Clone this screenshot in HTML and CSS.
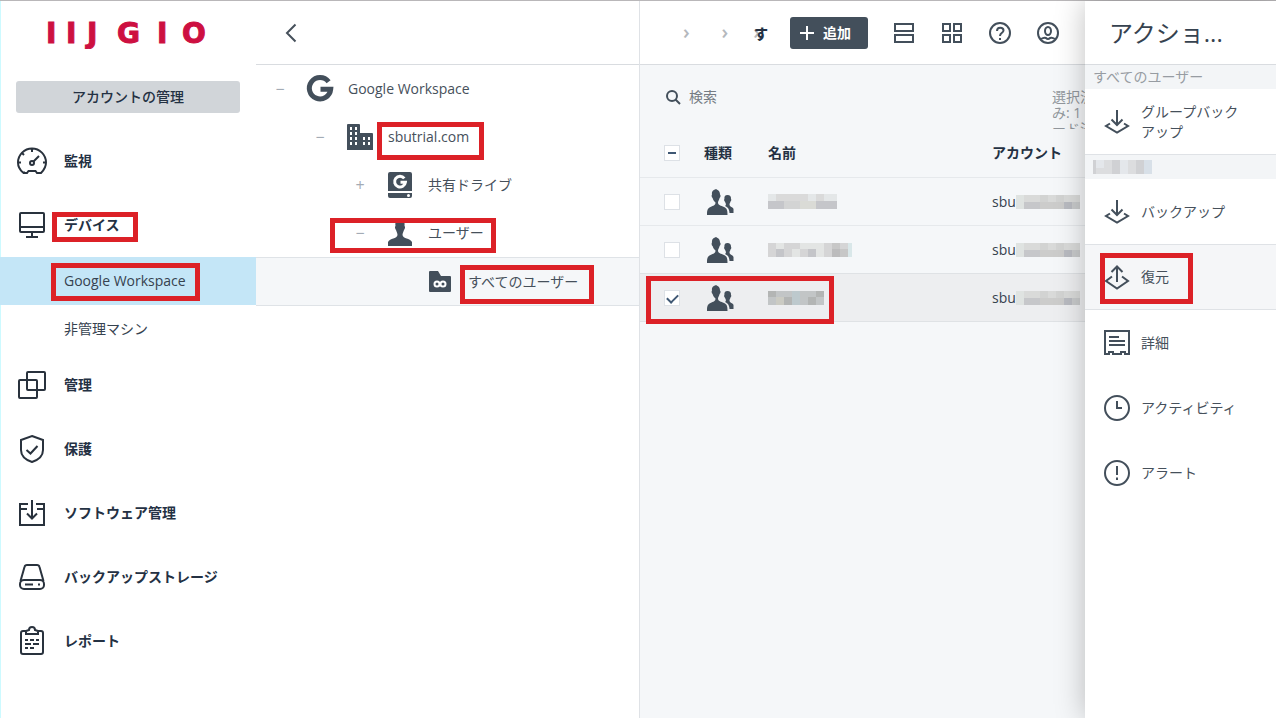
FILE: index.html
```html
<!DOCTYPE html>
<html lang="ja">
<head>
    <meta charset="UTF-8">
    <meta name="viewport" content="width=device-width, initial-scale=1.0">
    <title>IIJ GIO - Google Workspace</title>
    <link rel="stylesheet" href="styles.css">
</head>
<body>

    <!-- Shared icons -->
    <svg class="sprite" aria-hidden="true">
        <symbol id="people" viewBox="0 0 28 28">
            <path d="M10 1C11 2 14 2 14 6.500C15 7 14.600 9.500 13.600 10C13.300 12 12 13 12 14.500C12 17.500 15 17.500 18 19C21 20.500 21.500 22 21.500 27H1C1 22 1.500 20.500 4.500 19C7.500 17.500 9.500 17.500 9.500 14.500C8 13 7 12 6.600 10C5.600 9.500 5.300 7 6 6.500C5.500 3 7.500 2 10 1Z"/>
            <path d="M21.500 7C24 7 25.200 8.500 25 11C25.600 11.500 25.200 13 24.600 13.300C24.300 15 23.500 15.500 23.500 16.500C23.500 19 27 19 27.500 21V25H23.500C23.300 21 22 19.500 19 18C20.500 17 20 15.500 18.800 13.500C18.200 13 17.800 11.500 18.400 11C18.200 8.500 19 7 21.500 7Z"/>
        </symbol>
        <symbol id="backup" viewBox="0 0 26 26">
            <path d="M13 1V16M7.500 10.500L13 16L18.500 10.500M6 14.500L2 17L13 23.500L24 17L20 14.500"/>
        </symbol>
        <symbol id="account-mask" viewBox="0 0 64 14">
            <path fill="#dfe3e1" d="M0 0h8v14H0z"/>
            <path fill="#d9dad9" d="M8 0h56v7H8z"/>
            <path fill="#d2d3d2" d="M24 0h8v7h-8zM40 0h8v7h-8z"/>
            <path fill="#c6c7ca" d="M8 7h16v7H8zM48 7h8v7h-8z"/>
            <path fill="#cccccb" d="M24 7h24v7H24z"/>
            <path fill="#b9bbc1" d="M48 7h8v7h-8z"/>
            <path fill="#c8cacb" d="M56 7h8v7h-8z"/>
        </symbol>
    </svg>

    <div class="app">

        <!-- Sidebar -->
        <nav class="sidebar">
            <div class="brand">
                <svg width="168" height="32" viewBox="0 0 168 32" role="img" aria-label="IIJ GIO">
                    <text class="brand-text" y="26" x="2 22 43 60 73 113 138">IIJ GIO</text>
                </svg>
            </div>
            <button class="account-btn" type="button">アカウントの管理</button>

            <a class="nav-item" href="#">
                <svg class="nav-icon" viewBox="0 0 32 32"><path d="M9 27.500H7C4 25 2 21.500 2 17.500a14 14 0 0 1 28 0C30 21.500 28 25 25 28H21L19.500 26H12.500L11 28H7M16 4V7M2 17.500H5M27 17.500H30M6 8L8 10"/><circle cx="16" cy="18" r="2"/><path d="M17.500 16.500L23 11"/></svg>
                <span>監視</span>
            </a>
            <a class="nav-item" href="#">
                <svg class="nav-icon" viewBox="0 0 32 32"><rect x="4" y="4" width="24" height="19" rx="1"/><path d="M4 18H28M16 23V28M10 28H22"/></svg>
                <span>デバイス</span>
                <i class="mark mark-devices"></i>
            </a>
            <a class="nav-sub active" href="#">Google Workspace<i class="mark mark-workspace"></i></a>
            <a class="nav-sub" href="#">非管理マシン</a>
            <a class="nav-item" href="#">
                <svg class="nav-icon" viewBox="0 0 32 32"><rect x="11" y="3" width="18" height="18" rx="1"/><rect x="3" y="11" width="18" height="18" rx="1"/></svg>
                <span>管理</span>
            </a>
            <a class="nav-item" href="#">
                <svg class="nav-icon" viewBox="0 0 32 32"><path d="M16 3L27 7V17C27 23 22 27 16 29C10 27 5 23 5 17V7ZM10.500 17L14.500 20.500L21.500 13"/></svg>
                <span>保護</span>
            </a>
            <a class="nav-item" href="#">
                <svg class="nav-icon" viewBox="0 0 32 32"><path d="M12 7H4V28H28V7H20M4 12H11M21 12H28M16 3V21M11 16.500L16 21.500L21 16.500"/></svg>
                <span>ソフトウェア管理</span>
            </a>
            <a class="nav-item" href="#">
                <svg class="nav-icon" viewBox="0 0 32 32"><path d="M4.500 20L8.500 6Q9 4 11 4H21Q23 4 23.500 6L27.500 20"/><rect x="4" y="19" width="24" height="9" rx="4"/><path d="M9 23.500H17M22 23.500H24"/></svg>
                <span>バックアップストレージ</span>
            </a>
            <a class="nav-item" href="#">
                <svg class="nav-icon" viewBox="0 0 32 32"><path d="M10 6H7Q5 6 5 8V27Q5 29 7 29H25Q27 29 27 27V8Q27 6 25 6H22M10 9V6L13 5Q13 2 16 2Q19 2 19 5L22 6V9ZM9 15H12M14 15H18M20 15H23M9 19H15M17 19H23M9 23H12M14 23H18"/></svg>
                <span>レポート</span>
            </a>
        </nav>

        <!-- Group tree -->
        <section class="tree">
            <header class="bar">
                <button class="back-btn" type="button" aria-label="戻る">
                    <svg width="12" height="20" viewBox="0 0 12 20"><path d="M10.500 1.500L2 10L10.500 18.500"/></svg>
                </button>
            </header>
            <div class="tree-row">
                <span class="toggle">−</span>
                <svg class="tree-icon" viewBox="0 0 32 32"><path class="g-mark" d="M24.600 8.800A10.700 10.700 0 1 0 26.700 16.300H16.500"/></svg>
                <a href="#">Google Workspace</a>
            </div>
            <div class="tree-row level-1">
                <span class="toggle">−</span>
                <svg class="tree-icon" viewBox="0 0 32 32"><path fill-rule="evenodd" d="M4 3H15Q16 3 16 4V12H28Q29 12 29 13V29H3V4Q3 3 4 3ZM6 6V9H8V6ZM11 6V9H13V6ZM6 11V14H8V11ZM11 11V14H13V11ZM6 16V19H8V16ZM11 16V19H13V16ZM6 21V24H8V21ZM11 21V24H13V21ZM19 16V19H21V16ZM24 16V19H26V16ZM19 21V24H21V21ZM24 21V24H26V21Z"/></svg>
                <a href="#">sbutrial.com</a>
                <i class="mark mark-domain"></i>
            </div>
            <div class="tree-row level-2">
                <span class="toggle">+</span>
                <svg class="tree-icon" viewBox="0 0 32 32"><path d="M6 3H26Q28 3 28 5V22H4V5Q4 3 6 3ZM4 24H28V27Q28 29 26 29H6Q4 29 4 27Z"/><path class="g-small" d="M20.300 9.300A5.400 5.400 0 1 0 21.400 13.300H16.500"/><circle class="hole" cx="24.500" cy="26.500" r="1.500"/></svg>
                <a href="#">共有ドライブ</a>
            </div>
            <div class="tree-row level-2">
                <span class="toggle">−</span>
                <svg class="tree-icon" viewBox="0 0 32 32"><path d="M16 2C20 2 21 5 20.500 9C21.500 9.500 21 12 20 13C19.500 15 18.500 16 18.500 18C19 22 26 21 28 25V29H4V25C6 21 13 22 13.500 18C13.500 16 12.500 15 12 13C11 12 10.500 9.500 11.500 9C11 5 12 2 16 2Z"/></svg>
                <a href="#">ユーザー</a>
                <i class="mark mark-users"></i>
            </div>
            <div class="tree-row level-3 selected">
                <span class="toggle"></span>
                <svg class="tree-icon" viewBox="0 0 32 32"><path d="M6 5H14L17 10H26Q27 10 27 11V25Q27 26 26 26H6Q5 26 5 25V6Q5 5 6 5Z"/><circle class="ring" cx="13" cy="18" r="2.500"/><circle class="ring" cx="19" cy="18" r="2.500"/></svg>
                <a href="#">すべてのユーザー</a>
                <i class="mark mark-all"></i>
            </div>
        </section>

        <!-- Device list -->
        <main class="content">
            <header class="bar content-bar">
                <div class="crumbs">
                    <span>›</span><span>›</span><span class="last">›<b>す</b></span>
                </div>
                <button class="add-btn" type="button">
                    <svg width="14" height="14" viewBox="0 0 14 14"><path d="M7 0V14M0 7H14"/></svg>
                    追加
                </button>
                <div class="tools">
                    <button type="button" aria-label="リスト表示"><svg viewBox="0 0 24 24"><rect x="3" y="3" width="18" height="7"/><rect x="3" y="14" width="18" height="7"/></svg></button>
                    <button type="button" aria-label="グリッド表示"><svg viewBox="0 0 24 24"><path d="M3 3H10V10H3ZM14 3H21V10H14ZM3 14H10V21H3ZM14 14H21V21H14Z"/></svg></button>
                    <button type="button" aria-label="ヘルプ"><svg viewBox="0 0 24 24"><circle cx="12" cy="12" r="10"/><path d="M9 10C9 5.500 15.500 6 15.500 9.500C15.500 12 12 11.500 12 15M12 17V19"/></svg></button>
                    <button type="button" aria-label="アカウント"><svg viewBox="0 0 24 24"><circle cx="12" cy="12" r="10"/><ellipse cx="12" cy="10" rx="3" ry="4"/><path d="M5 18Q8 16 10 17Q12 19 14 17Q16 16 19 18"/></svg></button>
                </div>
            </header>

            <div class="filter">
                <label class="search">
                    <svg width="16" height="16" viewBox="0 0 16 16"><circle cx="7" cy="7" r="5"/><path d="M10.500 10.500L15 15"/></svg>
                    <input type="search" placeholder="検索" aria-label="検索">
                </label>
                <div class="count">選択済<br>み: 1<br>ード済</div>
            </div>

            <table>
                <thead>
                    <tr>
                        <th class="col-check"><input class="partial" type="checkbox" aria-label="すべて選択"></th>
                        <th class="col-type">種類</th>
                        <th class="col-name">名前</th>
                        <th>アカウント</th>
                    </tr>
                </thead>
                <tbody>
                    <tr>
                        <td class="col-check"><input type="checkbox" aria-label="行を選択"></td>
                        <td><svg class="people"><use href="#people"/></svg></td>
                        <td>
                            <svg class="mask" width="69" height="15"><path fill="#dadada" d="M0 0h69v7H0z"/><path fill="#e4e7e8" d="M0 0h8v7H0zM40 0h8v7h-8zM56 0h13v7H56z"/><path fill="#c5c6ca" d="M0 7h16v8H0zM48 7h21v8H48z"/><path fill="#d3d4d4" d="M16 7h16v8H16z"/><path fill="#dadbd6" d="M32 7h16v8H32z"/></svg>
                        </td>
                        <td><span class="account">sbu<svg class="mask" width="64" height="14"><use href="#account-mask"/></svg></span></td>
                    </tr>
                    <tr>
                        <td class="col-check"><input type="checkbox" aria-label="行を選択"></td>
                        <td><svg class="people"><use href="#people"/></svg></td>
                        <td>
                            <svg class="mask" width="84" height="14"><path fill="#d5d5d6" d="M0 0h84v14H0z"/><path fill="#e3e5e4" d="M8 0h8v6H8zM32 0h24v6H32zM24 6h8v8h-8zM48 6h8v8h-8z"/><path fill="#c4c5c9" d="M8 6h8v8H8zM40 6h8v8h-8z"/><path fill="#bcbcbd" d="M64 6h8v8h-8z"/><path fill="#c7c7c7" d="M64 0h8v6h-8zM72 6h8v8h-8z"/><path fill="#d9e7e9" d="M80 0h4v14h-4z"/></svg>
                        </td>
                        <td><span class="account">sbu<svg class="mask" width="64" height="14"><use href="#account-mask"/></svg></span></td>
                    </tr>
                    <tr class="checked">
                        <td class="col-check"><input type="checkbox" aria-label="行を選択" checked><i class="mark mark-row"></i></td>
                        <td><svg class="people"><use href="#people"/></svg></td>
                        <td>
                            <svg class="mask" width="56" height="14"><path fill="#c2c5c6" d="M0 0h56v14H0z"/><path fill="#b3b5b4" d="M0 0h8v6H0zM16 6h8v8h-8zM48 0h8v6h-8zM40 6h8v8h-8z"/><path fill="#cbcbc3" d="M8 6h8v8H8z"/><path fill="#bdc9cd" d="M24 0h8v14h-8z"/></svg>
                        </td>
                        <td><span class="account">sbu<svg class="mask" width="64" height="14"><use href="#account-mask"/></svg></span></td>
                    </tr>
                </tbody>
            </table>
        </main>

        <!-- Action panel -->
        <aside class="panel">
            <header class="bar"><h2>アクショ...</h2></header>
            <h3>すべてのユーザー</h3>
            <a class="action divider" href="#">
                <svg><use href="#backup"/></svg>
                <span>グループバックアップ</span>
            </a>
            <h3><svg class="mask" width="59" height="14"><path fill="#dcdddf" d="M0 0h59v14H0z"/><path fill="#d0d1d4" d="M0 0h3v14H0zM19 0h8v14h-8zM43 0h8v14h-8z"/><path fill="#e4e7eb" d="M3 0h8v8H3zM27 0h8v14h-8z"/><path fill="#d8e0e8" d="M51 0h8v14h-8z"/></svg></h3>
            <a class="action divider" href="#">
                <svg><use href="#backup"/></svg>
                <span>バックアップ</span>
            </a>
            <a class="action divider current" href="#">
                <svg viewBox="0 0 26 26"><path d="M13 18V2.500M7.500 8L13 2.500L18.500 8M8 12.500L2 17L13 24.500L24 17L18 12.500"/></svg>
                <span>復元</span>
                <i class="mark mark-restore"></i>
            </a>
            <a class="action" href="#">
                <svg viewBox="0 0 26 26"><path d="M1 1H25V24H21V22H17V24H9V22H5V24H1ZM5 7H15M5 11H21M5 15H21"/></svg>
                <span>詳細</span>
            </a>
            <a class="action" href="#">
                <svg viewBox="0 0 26 26"><circle cx="13" cy="13" r="12"/><path d="M13 6V13H18"/></svg>
                <span>アクティビティ</span>
            </a>
            <a class="action" href="#">
                <svg viewBox="0 0 26 26"><circle cx="13" cy="13" r="12"/><path d="M13 6V15M13 17.500V20"/></svg>
                <span>アラート</span>
            </a>
        </aside>
    </div>

</body>
</html>
```
FILE: styles.css
```css
* {
    box-sizing: border-box;
}
body {
    margin: 0;
    font-family: "Open Sans", "Noto Sans CJK JP", sans-serif;
    font-size: 14px;
    line-height: 20px;
    color: #46505b;
    background: #fff;
}
a {
    color: inherit;
    text-decoration: none;
}
button {
    font: inherit;
    border: none;
    padding: 0;
    background: none;
    cursor: pointer;
}
svg {
    display: block;
    flex: none;
}
.sprite {
    position: absolute;
    width: 0;
    height: 0;
}
.app {
    display: flex;
    min-height: 100vh;
    border-top: 1px solid #b9b7b9;
}
.bar {
    display: flex;
    align-items: center;
    height: 64px;
    border-bottom: 1px solid #d9dce0;
    background: #fff;
}

/* Sidebar */
.sidebar {
    flex: 0 0 256px;
    box-shadow: inset 1px 0 #cdfaff;
}
.brand {
    display: flex;
    justify-content: center;
    align-items: center;
    height: 64px;
    margin-bottom: 16px;
}
.brand-text {
    font-family: "DejaVu Sans", sans-serif;
    font-size: 28px;
    font-weight: bold;
    fill: #cd1041;
    stroke: #cd1041;
    stroke-width: 1;
}
.account-btn {
    display: block;
    width: calc(100% - 32px);
    height: 32px;
    margin: 0 16px 16px;
    border-radius: 3px;
    background: #d1d5d9;
    color: #243143;
    font-weight: 500;
}
.nav-item {
    position: relative;
    display: flex;
    align-items: center;
    gap: 16px;
    height: 64px;
    padding-left: 16px;
    color: #243143;
    font-weight: 600;
}
.nav-icon {
    width: 32px;
    height: 32px;
    fill: none;
    stroke: #29323d;
    stroke-width: 2;
}
.nav-sub {
    position: relative;
    display: flex;
    align-items: center;
    height: 48px;
    padding-left: 64px;
    color: #36424f;
}
.nav-sub.active {
    background: #c4e6f7;
}

/* Tree */
.tree {
    flex: 0 0 384px;
    border-right: 1px solid #dfe2e6;
}
.back-btn {
    margin-left: 29px;
}
.back-btn svg {
    fill: none;
    stroke: #46505b;
    stroke-width: 2;
}
.tree-row {
    position: relative;
    display: flex;
    align-items: center;
    height: 48px;
    padding-left: 16px;
}
.level-1 {
    padding-left: 56px;
}
.level-2 {
    padding-left: 96px;
}
.level-3 {
    padding-left: 136px;
}
.tree-row.selected {
    height: 49px;
    background: #f5f7f9;
    border-top: 1px solid #dfe3e7;
    border-bottom: 1px solid #dfe3e7;
}
.toggle {
    width: 16px;
    margin-right: 16px;
    text-align: center;
    font-size: 16px;
    color: #a3abb5;
}
.tree-icon {
    width: 32px;
    height: 32px;
    margin-right: 12px;
    fill: #434f5b;
}
.g-mark {
    fill: none;
    stroke: #434f5b;
    stroke-width: 5;
}
.g-small {
    fill: none;
    stroke: #fff;
    stroke-width: 3;
}
.hole {
    fill: #fff;
}
.ring {
    fill: none;
    stroke: #fff;
    stroke-width: 2;
}

/* List */
.content {
    flex: 1;
    min-width: 0;
    overflow: hidden;
    background: #f5f7f9;
}
.content-bar {
    justify-content: flex-end;
    padding-right: 25px;
}
.crumbs {
    display: flex;
    gap: 32px;
    margin-right: 22px;
    font-size: 20px;
    font-weight: 600;
    color: #b4b8bd;
}
.crumbs .last {
    margin-left: -7px;
}
.crumbs b {
    margin-left: -6px;
    font-size: 14px;
    color: #243143;
}
.add-btn {
    display: flex;
    align-items: center;
    gap: 9px;
    height: 32px;
    padding: 0 17px 0 10px;
    margin-right: 24px;
    border-radius: 3px;
    background: #434f5b;
    color: #fff;
    font-weight: bold;
}
.add-btn svg {
    stroke: #fff;
    stroke-width: 2;
}
.tools {
    display: flex;
    gap: 24px;
}
.tools svg {
    width: 24px;
    height: 24px;
    fill: none;
    stroke: #434f5b;
    stroke-width: 2;
}
.filter {
    display: flex;
    align-items: center;
    height: 64px;
    padding-left: 25px;
}
.search {
    display: flex;
    flex: 1;
    align-items: center;
    gap: 8px;
}
.search svg {
    fill: none;
    stroke: #434f5b;
    stroke-width: 2;
}
.search input {
    flex: 1;
    min-width: 0;
    border: none;
    padding: 0;
    background: none;
    font: inherit;
    outline: none;
}
.search input::placeholder {
    color: #757c84;
}
.count {
    align-self: flex-end;
    width: 33px;
    height: 40px;
    overflow: hidden;
    line-height: 16px;
    white-space: nowrap;
    color: #92979d;
}
table {
    width: 100%;
    table-layout: fixed;
    border-spacing: 0;
}
th, td {
    height: 48px;
    padding: 0;
    text-align: left;
    color: #36424f;
}
th {
    color: #243143;
    font-weight: bold;
}
td {
    border-top: 1px solid #e6e9ec;
}
.col-check {
    position: relative;
    width: 64px;
    padding-left: 24px;
}
.col-type {
    width: 64px;
}
.col-name {
    width: 224px;
}
.checked td {
    height: 49px;
    background: #edeef0;
    border-top-color: #dfe2e5;
    border-bottom: 1px solid #dfe2e5;
}
input[type="checkbox"] {
    display: block;
    appearance: none;
    width: 16px;
    height: 16px;
    margin: 0;
    border: 1px solid #dde1e6;
    background: #fff;
}
input[type="checkbox"]:checked::before {
    content: "";
    display: block;
    width: 9px;
    height: 5px;
    margin: 3px 2px;
    border-left: 2px solid #3f5874;
    border-bottom: 2px solid #3f5874;
    transform: rotate(-45deg);
}
.partial::before {
    content: "";
    display: block;
    width: 8px;
    height: 2px;
    margin: 6px 3px;
    background: #3f5874;
}
.people {
    width: 28px;
    height: 28px;
    margin-left: 2px;
    fill: #434f5b;
}
.account {
    display: flex;
    align-items: center;
}
.mask {
    shape-rendering: crispEdges;
}

/* Action panel */
.panel {
    position: relative;
    flex: 0 0 191px;
    background: #fff;
    box-shadow: 0 0 28px rgba(0, 0, 0, 0.25);
}
.panel h2 {
    margin: 0;
    padding-left: 24px;
    font-size: 24px;
    font-weight: normal;
    color: #36424f;
}
.panel h3 {
    display: flex;
    align-items: center;
    height: 24px;
    margin: 0;
    padding-left: 8px;
    background: #f3f5f7;
    font-size: 14px;
    font-weight: normal;
    color: #979ca2;
}
.action {
    position: relative;
    display: flex;
    align-items: center;
    gap: 11px;
    height: 65px;
    padding: 0 32px 0 19px;
}
.action.divider {
    height: 66px;
    border-bottom: 1px solid #dfe2e6;
}
.action.current {
    height: 65px;
    background: #f5f6f8;
}
.action svg {
    width: 26px;
    height: 26px;
    fill: none;
    stroke: #434f5b;
    stroke-width: 2;
}

/* Red highlight frames drawn over the controls */
.mark {
    position: absolute;
    z-index: 1;
    border: 5px solid #dc2127;
    pointer-events: none;
}
.mark-devices {
    left: 52px;
    top: 19px;
    width: 86px;
    height: 30px;
}
.mark-workspace {
    left: 51px;
    top: 6px;
    width: 149px;
    height: 38px;
}
.mark-domain {
    left: 121px;
    top: 9px;
    width: 107px;
    height: 38px;
}
.mark-users {
    left: 74px;
    top: 9px;
    width: 166px;
    height: 35px;
}
.mark-all {
    left: 204px;
    top: 7px;
    width: 134px;
    height: 39px;
}
.mark-row {
    left: 6px;
    top: 2px;
    width: 188px;
    height: 48px;
}
.mark-restore {
    left: 15px;
    top: 8px;
    width: 93px;
    height: 51px;
}
```
